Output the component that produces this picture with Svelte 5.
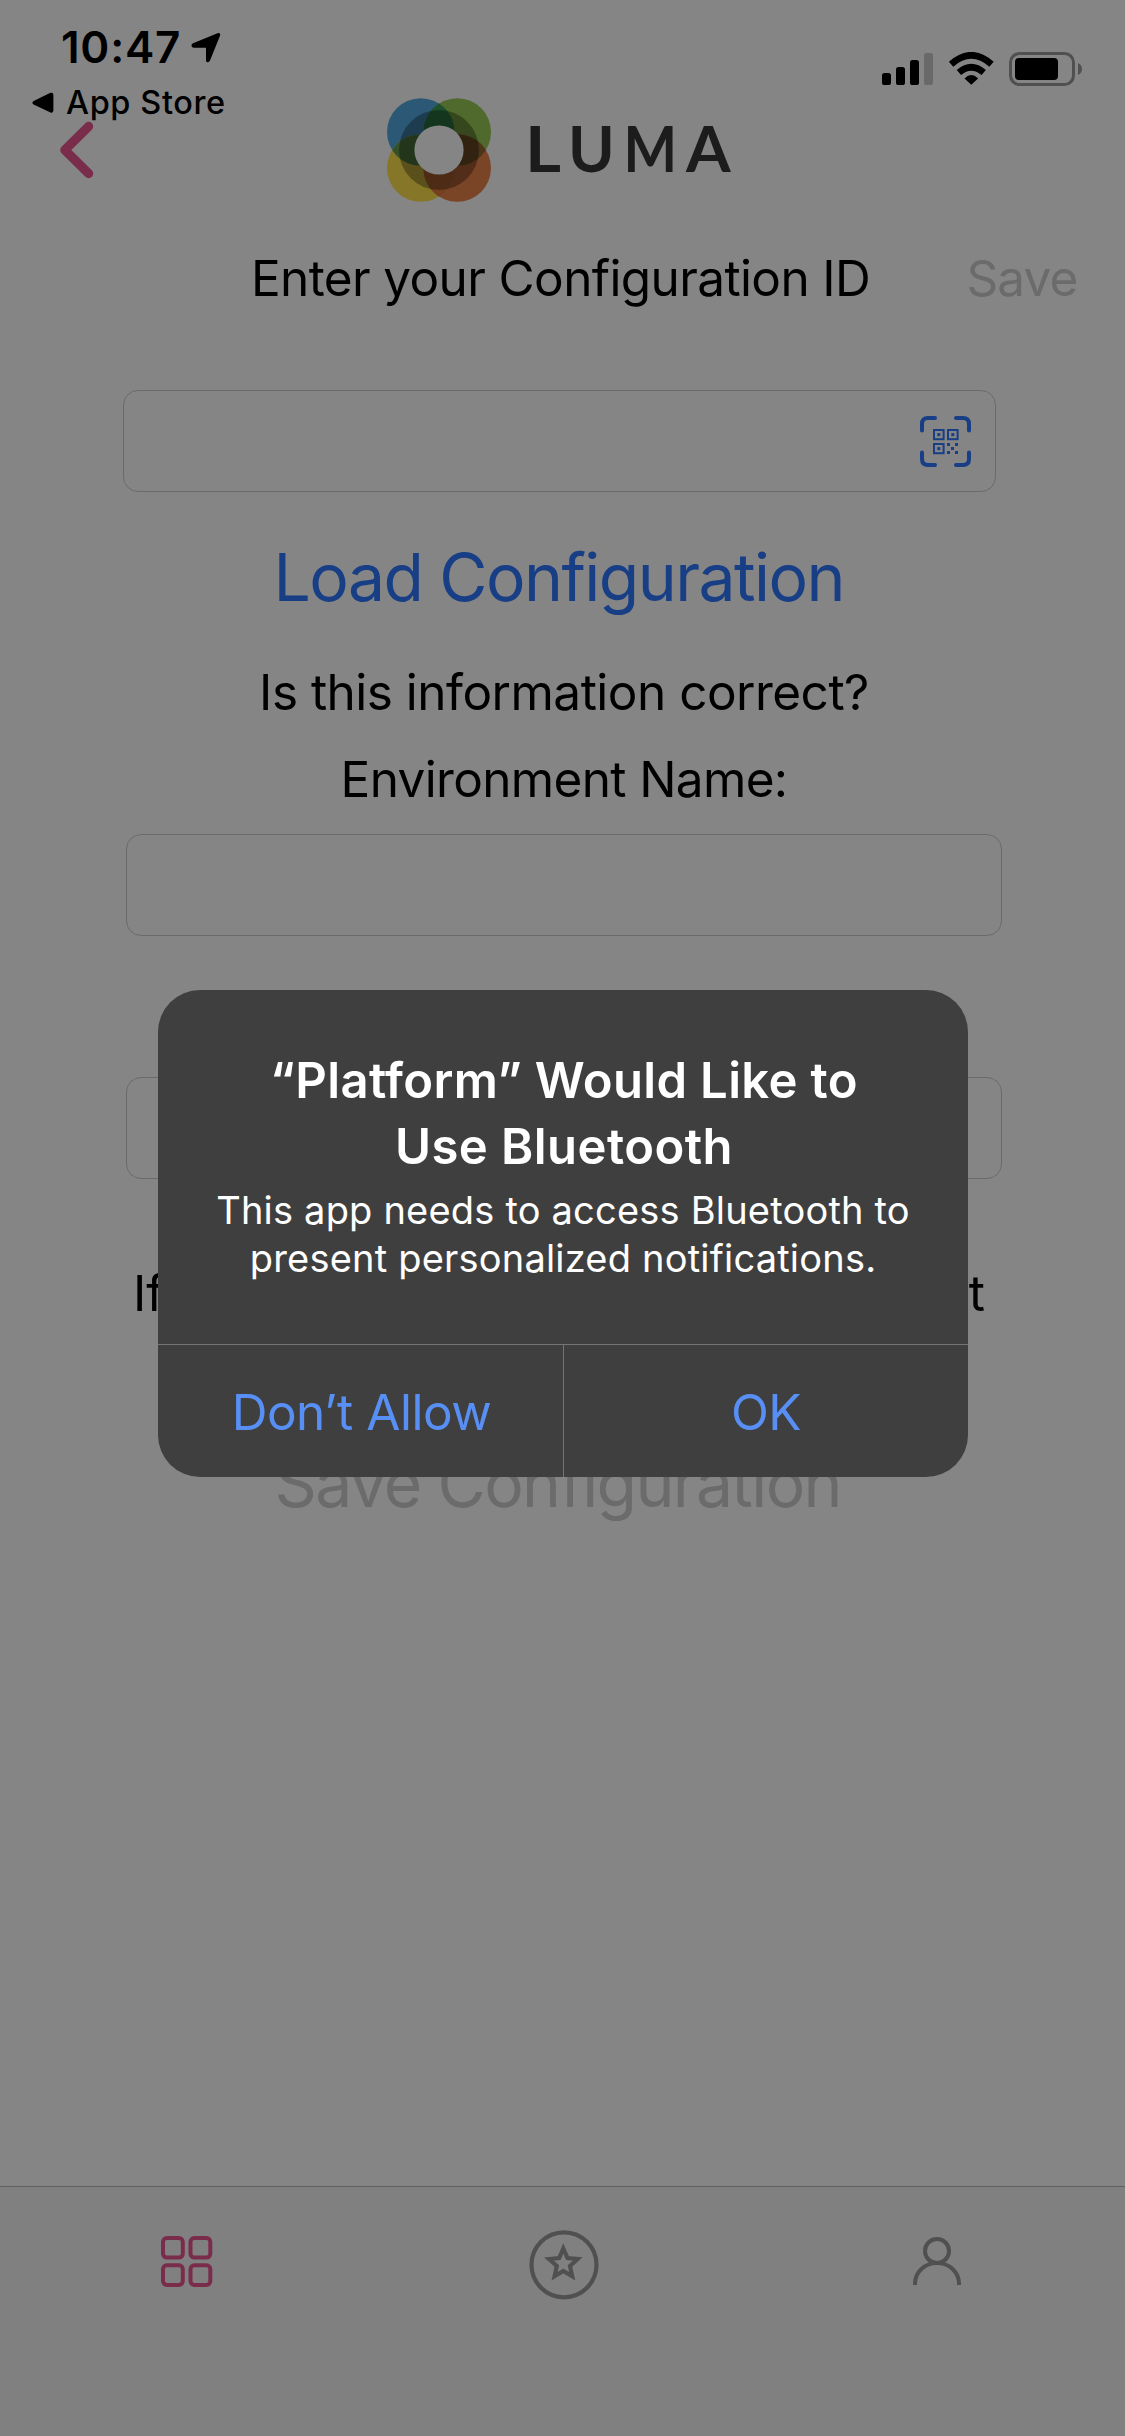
<script>
  const signal = [
    { x: 0, y: 20, h: 12, on: true },
    { x: 14, y: 14, h: 18, on: true },
    { x: 28, y: 7, h: 25, on: true },
    { x: 42, y: 0, h: 32, on: false }
  ];
  const wordmark = [
    { letter: 'L', x: 525, scale: 1.1 },
    { letter: 'U', x: 568, scale: 1 },
    { letter: 'M', x: 623.5, scale: 0.9 },
    { letter: 'A', x: 686, scale: 1.02 }
  ];
  const tiles = [[2, 2], [29.5, 2], [2, 29.3], [29.5, 29.3]];
  const finders = [[13, 13], [27, 13], [13, 27]];
  const dots = [[27, 27], [35, 27], [31, 31], [27, 35], [35, 35]];
</script>

<div class="screen">
  <header>
    <div class="left">
      <div class="time">
        <span>10:47</span>
        <svg width="32" height="32" viewBox="0 0 32 32"><path d="M3 12.2 L27.5 2.3 Q30.8 1.4 30 4.7 L20 29.5 Q18.9 31.8 17.1 31.2 Q16 30.8 16 29 V16.8 H4 Q1.8 16.7 1.5 15 Q1.2 13 3 12.2Z" /></svg>
      </div>
      <div class="return">
        <svg width="22" height="22" viewBox="0 0 22 22"><path d="M1.6 8.9 L18.5 .8 Q21.4 0 21.4 3 V18.5 Q21.2 21.4 18.5 20.4 L1.6 12.5 Q-.9 10.7 1.6 8.9Z" /></svg>
        <span>App Store</span>
      </div>
      <svg class="back" width="36" height="60" viewBox="60 120 36 60"><path d="M88.6 126.4 L64.8 150 L88.6 173.6" /></svg>
    </div>

    <svg class="logo" width="375" height="110" viewBox="375 95 375 110" role="img" aria-label="Luma">
      <defs>
        <clipPath id="inBlue"><circle cx="420.8" cy="132" r="33.8" /></clipPath>
        <clipPath id="inOrange"><circle cx="457.2" cy="168" r="33.8" /></clipPath>
      </defs>
      <circle cx="420.8" cy="132" r="33.8" fill="#2b5975" />
      <circle cx="457.2" cy="132" r="33.8" fill="#50692c" />
      <circle cx="420.8" cy="168" r="33.8" fill="#857628" />
      <circle cx="457.2" cy="168" r="33.8" fill="#7a4427" />
      <g clip-path="url(#inBlue)">
        <circle cx="457.2" cy="132" r="33.8" fill="#1e502e" />
        <circle cx="420.8" cy="168" r="33.8" fill="#345029" />
      </g>
      <g clip-path="url(#inOrange)">
        <circle cx="457.2" cy="132" r="33.8" fill="#4b3419" />
        <circle cx="420.8" cy="168" r="33.8" fill="#744020" />
      </g>
      <circle cx="439" cy="150" r="40" fill="#000" opacity=".32" />
      <circle cx="439" cy="150" r="24.6" fill="#858585" />
      {#each wordmark as w}
        <text transform="translate({w.x} 172) scale({w.scale} 1)">{w.letter}</text>
      {/each}
    </svg>

    <div class="status">
      <svg width="204" height="36" viewBox="0 0 204 36">
        {#each signal as s}
          <rect x={s.x} y={s.y + 1} width="9" height={s.h} rx="2.6" fill={s.on ? '#000' : '#696969'} />
        {/each}
        <g transform="translate(89.3 32.8)">
          <path d="M0 0 L-6.8 -6.4 Q0 -13 6.8 -6.4Z" />
          <path d="M-12.4 -12.2 Q0 -23 12.4 -12.2" class="wave" />
          <path d="M-20.2 -20.6 Q0 -38.4 20.2 -20.6" class="wave" />
        </g>
        <rect x="128.5" y="1.5" width="63" height="31" rx="9" fill="none" stroke="#505050" stroke-width="3" />
        <rect x="133" y="6" width="43" height="22" rx="4" />
        <path d="M196 11 Q200 13 200 17 Q200 21 196 23Z" fill="#505050" />
      </svg>
    </div>
  </header>

  <div class="heading">
    <span></span>
    <h1>Enter your Configuration ID</h1>
    <button class="save">Save</button>
  </div>

  <section class="load">
    <div class="field">
      <svg width="51" height="51" viewBox="0 0 51 51">
        <path class="corner" d="M2 14.5 V8 Q2 2 8 2 H15 M36 2 H43 Q49 2 49 8 V14.5 M49 36.5 V43 Q49 49 43 49 H36 M15 49 H8 Q2 49 2 43 V36.5" />
        {#each finders as [x, y]}
          <rect x={x + 1} y={y + 1} width="9.6" height="9.2" fill="none" stroke="#183f85" stroke-width="2" />
          <rect x={x + 4.3} y={y + 4.1} width="3" height="3" />
        {/each}
        {#each dots as [x, y]}
          <rect {x} {y} width="3" height="3" />
        {/each}
      </svg>
    </div>
    <button class="big">Load Configuration</button>
  </section>

  <section class="details">
    <p class="question">Is this information correct?</p>
    <label class="name" for="env">Environment Name:</label>
    <div class="field" id="env"></div>
    <div class="field second"></div>
    <p class="hint"><span>If</span><span>t</span></p>
  </section>

  <button class="big commit">Save Configuration</button>

  <nav>
    <svg width="56" height="56" viewBox="0 0 56 56" class="grid">
      {#each tiles as [x, y]}
        <rect {x} {y} width="19.8" height="19.6" rx="3.8" />
      {/each}
    </svg>
    <svg width="72" height="72" viewBox="0 0 72 72" class="star">
      <circle cx="36" cy="35.8" r="32.5" />
      <path d="M35.3 19.5 L39.5 29 L49.7 30 L42 37 L44.2 47.2 L35.3 42 L26.6 47.2 L28.8 37 L21 30 L31.2 29Z" />
    </svg>
    <svg width="50" height="50" viewBox="0 0 50 50" class="person">
      <circle cx="25" cy="15" r="12" />
      <path d="M3 49 V47.5 A22 20.5 0 0 1 47 47.5 V49" />
    </svg>
  </nav>

  <div class="alert" role="alertdialog">
    <div class="copy">
      <h2><span class="t1">“Platform” Would Like to</span><span>Use Bluetooth</span></h2>
      <p>This app needs to access Bluetooth to<br />present personalized notifications.</p>
    </div>
    <div class="actions">
      <button class="deny">Don’t Allow</button>
      <button>OK</button>
    </div>
  </div>
</div>

<style>
  :global(body) { margin: 0; background: #858585; }
  .screen {
    position: relative;
    display: flex;
    flex-direction: column;
    width: 1125px;
    height: 2436px;
    overflow: hidden;
    background: #858585;
    color: #000;
    font: 400 49.5px Inter, "Liberation Sans", sans-serif;
  }
  * { box-sizing: border-box; }
  svg { display: block; flex: none; }
  p, h1, h2 { margin: 0; font-weight: 400; font-size: inherit; }
  button { padding: 0; border: 0; background: none; font: inherit; letter-spacing: inherit; color: inherit; white-space: nowrap; }

  header { display: grid; grid-template-columns: 375px 375px 375px; height: 220px; flex: none; }
  .time { display: flex; align-items: center; gap: 9px; height: 50px; margin-top: 22px; padding-left: 61px; font-size: 44px; font-weight: 600; letter-spacing: .76px; }
  .return { display: flex; align-items: center; gap: 12px; height: 41px; margin-top: 10px; padding-left: 32px; font-size: 32.5px; font-weight: 500; letter-spacing: .6px; }
  .back { margin: -3px 0 0 60px; }
  .back path { fill: none; stroke: #7a2d4b; stroke-width: 9.2; stroke-linecap: round; stroke-linejoin: round; }
  .logo { margin-top: 95px; }
  .logo text { font: 700 63px Lato, sans-serif; fill: #1c1c1c; }
  .status { padding: 52px 0 0 132px; }
  .wave { fill: none; stroke: #000; stroke-width: 6.6; }

  .heading { display: grid; grid-template-columns: 200px 721px 204px; height: 116px; line-height: 116px; flex: none; text-align: center; }
  h1 { letter-spacing: -.62px; }
  .save { padding-right: 2px; color: #6b6b6b; letter-spacing: -.9px; }

  .field { display: flex; align-items: center; justify-content: flex-end; height: 102px; padding-right: 24px; border: 1.5px solid #6b6b6b; border-radius: 15px; }
  .field rect { fill: #183f85; }
  .field rect[fill="none"] { fill: none; }
  .corner { fill: none; stroke: #183f85; stroke-width: 4; stroke-linecap: round; }
  .load { display: flex; flex-direction: column; width: 873px; margin: 54px 0 0 123px; }
  .big { height: 170px; padding-right: 1.5px; line-height: 170px; font-size: 66px; letter-spacing: -1.55px; color: #183f85; }

  .details { display: flex; flex-direction: column; width: 876px; margin-left: 126px; text-align: center; }
  .question { line-height: 60px; letter-spacing: -.51px; }
  .name { margin: 17px 0 15px; line-height: 80px; letter-spacing: -.65px; }
  .second { margin-top: 141px; }
  .hint { display: flex; justify-content: space-between; margin-top: 74px; padding: 0 17px 0 7px; line-height: 80px; }
  .commit { height: 100px; margin: 100px 0 0 122px; width: 873px; line-height: 100px; letter-spacing: -1.65px; color: #6b6b6b; }

  nav { display: flex; justify-content: space-between; height: 250px; margin-top: auto; padding: 45px 163px 0 161px; border-top: 1px solid #5f5f5f; background: #808080; }
  .grid { margin-top: 4px; fill: none; stroke: #7a2d4b; stroke-width: 4; }
  .star { position: relative; left: -1px; margin-top: -3px; fill: none; stroke: #505050; stroke-width: 4.2; }
  .person { margin-top: 4px; fill: none; stroke: #505050; stroke-width: 4; }

  .alert { position: absolute; top: 990px; left: 158px; display: flex; flex-direction: column; width: 810px; height: 487px; overflow: hidden; border-radius: 42px; background: #3f3f3f; color: #fff; text-align: center; }
  .copy { flex: 1; padding-top: 58px; }
  h2 { display: flex; flex-direction: column; padding-left: 2px; font-size: 49px; font-weight: 600; line-height: 66px; letter-spacing: .45px; }
  .t1 { letter-spacing: .36px; }
  .copy p { margin-top: 6px; font-size: 38px; line-height: 48px; letter-spacing: .2px; }
  .actions { display: grid; grid-template-columns: 406px 404px; height: 133px; border-top: 1px solid #747474; color: #588ff5; letter-spacing: -.47px; }
  .actions button { padding-top: 1px; }
  .deny { padding-left: 2px; border-right: 1px solid #747474; }
</style>
